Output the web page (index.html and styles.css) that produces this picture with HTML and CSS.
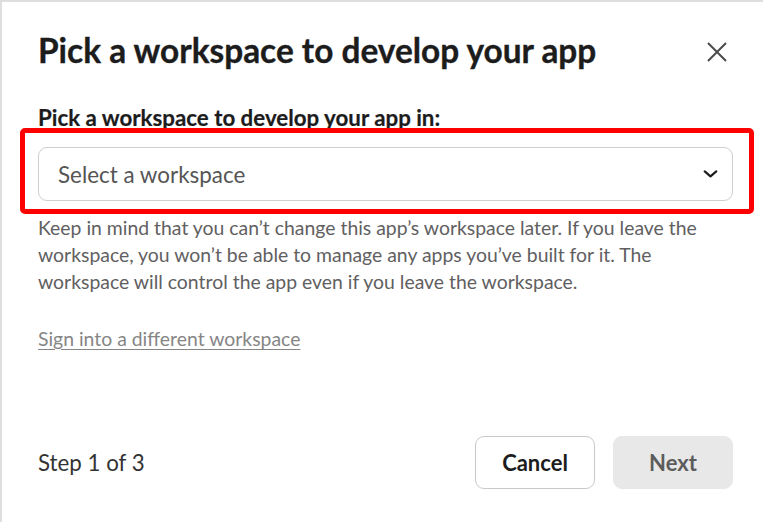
FILE: index.html
```html
<!DOCTYPE html>
<html lang="en">
<head>
<meta charset="utf-8">
<title>Pick a workspace</title>
<link rel="stylesheet" href="styles.css">
</head>
<body>
<div class="modal">
  <header class="modal-header">
    <h1 class="modal-title">Pick a workspace to develop your app</h1>
    <button class="close-btn" aria-label="Close">
      <svg viewBox="0 0 20 20" width="20" height="20"><path d="M1 1 L19 19 M19 1 L1 19" stroke="#4a4a4a" stroke-width="2" fill="none"/></svg>
    </button>
  </header>
  <div class="modal-body">
    <label class="field-label">Pick a workspace to develop your app in:</label>
    <div class="select-wrap">
      <div class="select">
        <span class="placeholder">Select a workspace</span>
        <svg class="chevron" viewBox="0 0 16 9" width="15" height="8"><path d="M1.5 1.5 L8 7.2 L14.5 1.5" stroke="#1d1c1d" stroke-width="2.4" fill="none" stroke-linecap="round" stroke-linejoin="round"/></svg>
      </div>
      <div class="highlight"></div>
    </div>
    <p class="help">Keep in mind that you can’t change this app’s workspace later. If you leave the workspace, you won’t be able to manage any apps you’ve built for it. The workspace will control the app even if you leave the workspace.</p>
    <a class="link" href="#">Sign into a different workspace</a>
  </div>
  <footer class="modal-footer">
    <span class="step">Step 1 of 3</span>
    <div class="actions">
      <button class="btn btn-cancel">Cancel</button>
      <button class="btn btn-next">Next</button>
    </div>
  </footer>
</div>
</body>
</html>
```
FILE: styles.css
```css
html, body {
  margin: 0;
  padding: 0;
  background: #ffffff;
}
body {
  font-family: Lato, "Noto Sans", sans-serif;
  color: #1d1c1d;
}
.modal {
  box-sizing: border-box;
  height: 522px;
  border-top: 2px solid #dedede;
  border-left: 2px solid #dedede;
  padding: 0 30px 33px 36px;
  display: flex;
  flex-direction: column;
}
.modal-header {
  display: flex;
  align-items: center;
  justify-content: space-between;
  padding-top: 28px;
}
.modal-title {
  margin: 0;
  font-size: 33.4px;
  line-height: 40px;
  font-weight: 700;
  color: #1d1c1d;
  -webkit-text-stroke: 0.35px #1d1c1d;
}
.close-btn {
  border: none;
  background: none;
  padding: 0;
  margin-right: 6px;
  margin-top: 4px;
  width: 20px;
  height: 20px;
  display: flex;
}
.modal-body {
  display: flex;
  flex-direction: column;
  align-items: flex-start;
}
.field-label {
  margin-top: 35px;
  font-size: 22.3px;
  line-height: 26px;
  font-weight: 700;
  -webkit-text-stroke: 0.2px #1d1c1d;
}
.select-wrap {
  position: relative;
  align-self: stretch;
  margin-top: 16px;
}
.select {
  box-sizing: border-box;
  height: 54px;
  border: 1px solid #cfcfcf;
  border-radius: 9px;
  display: flex;
  align-items: center;
  justify-content: space-between;
  padding: 0 14px 0 19px;
}
.placeholder {
  font-size: 22.4px;
  color: #555555;
}
.highlight {
  position: absolute;
  left: -18px;
  top: -19px;
  right: -21px;
  bottom: -13px;
  border: 5px solid #ff0000;
  border-radius: 5px;
  pointer-events: none;
}
.help {
  margin: 13px 0 0;
  font-size: 19.4px;
  line-height: 27px;
  color: #616061;
}
.link {
  margin-top: 30px;
  font-size: 19.4px;
  line-height: 27px;
  color: #868686;
  text-decoration: underline;
  text-underline-offset: 3px;
}
.modal-footer {
  margin-top: auto;
  display: flex;
  align-items: center;
  justify-content: space-between;
}
.step {
  font-size: 22.3px;
  color: #333333;
}
.actions {
  display: flex;
  gap: 18px;
}
.btn {
  box-sizing: border-box;
  width: 120px;
  height: 53px;
  border-radius: 9px;
  font-family: Lato, "Noto Sans", sans-serif;
  font-size: 22px;
  font-weight: 700;
  padding: 0;
}
.btn-cancel {
  background: #ffffff;
  border: 1px solid #c9c9c9;
  color: #1d1c1d;
}
.btn-next {
  background: #e8e8e8;
  border: 1px solid #e8e8e8;
  color: #5c5c5c;
}
```
